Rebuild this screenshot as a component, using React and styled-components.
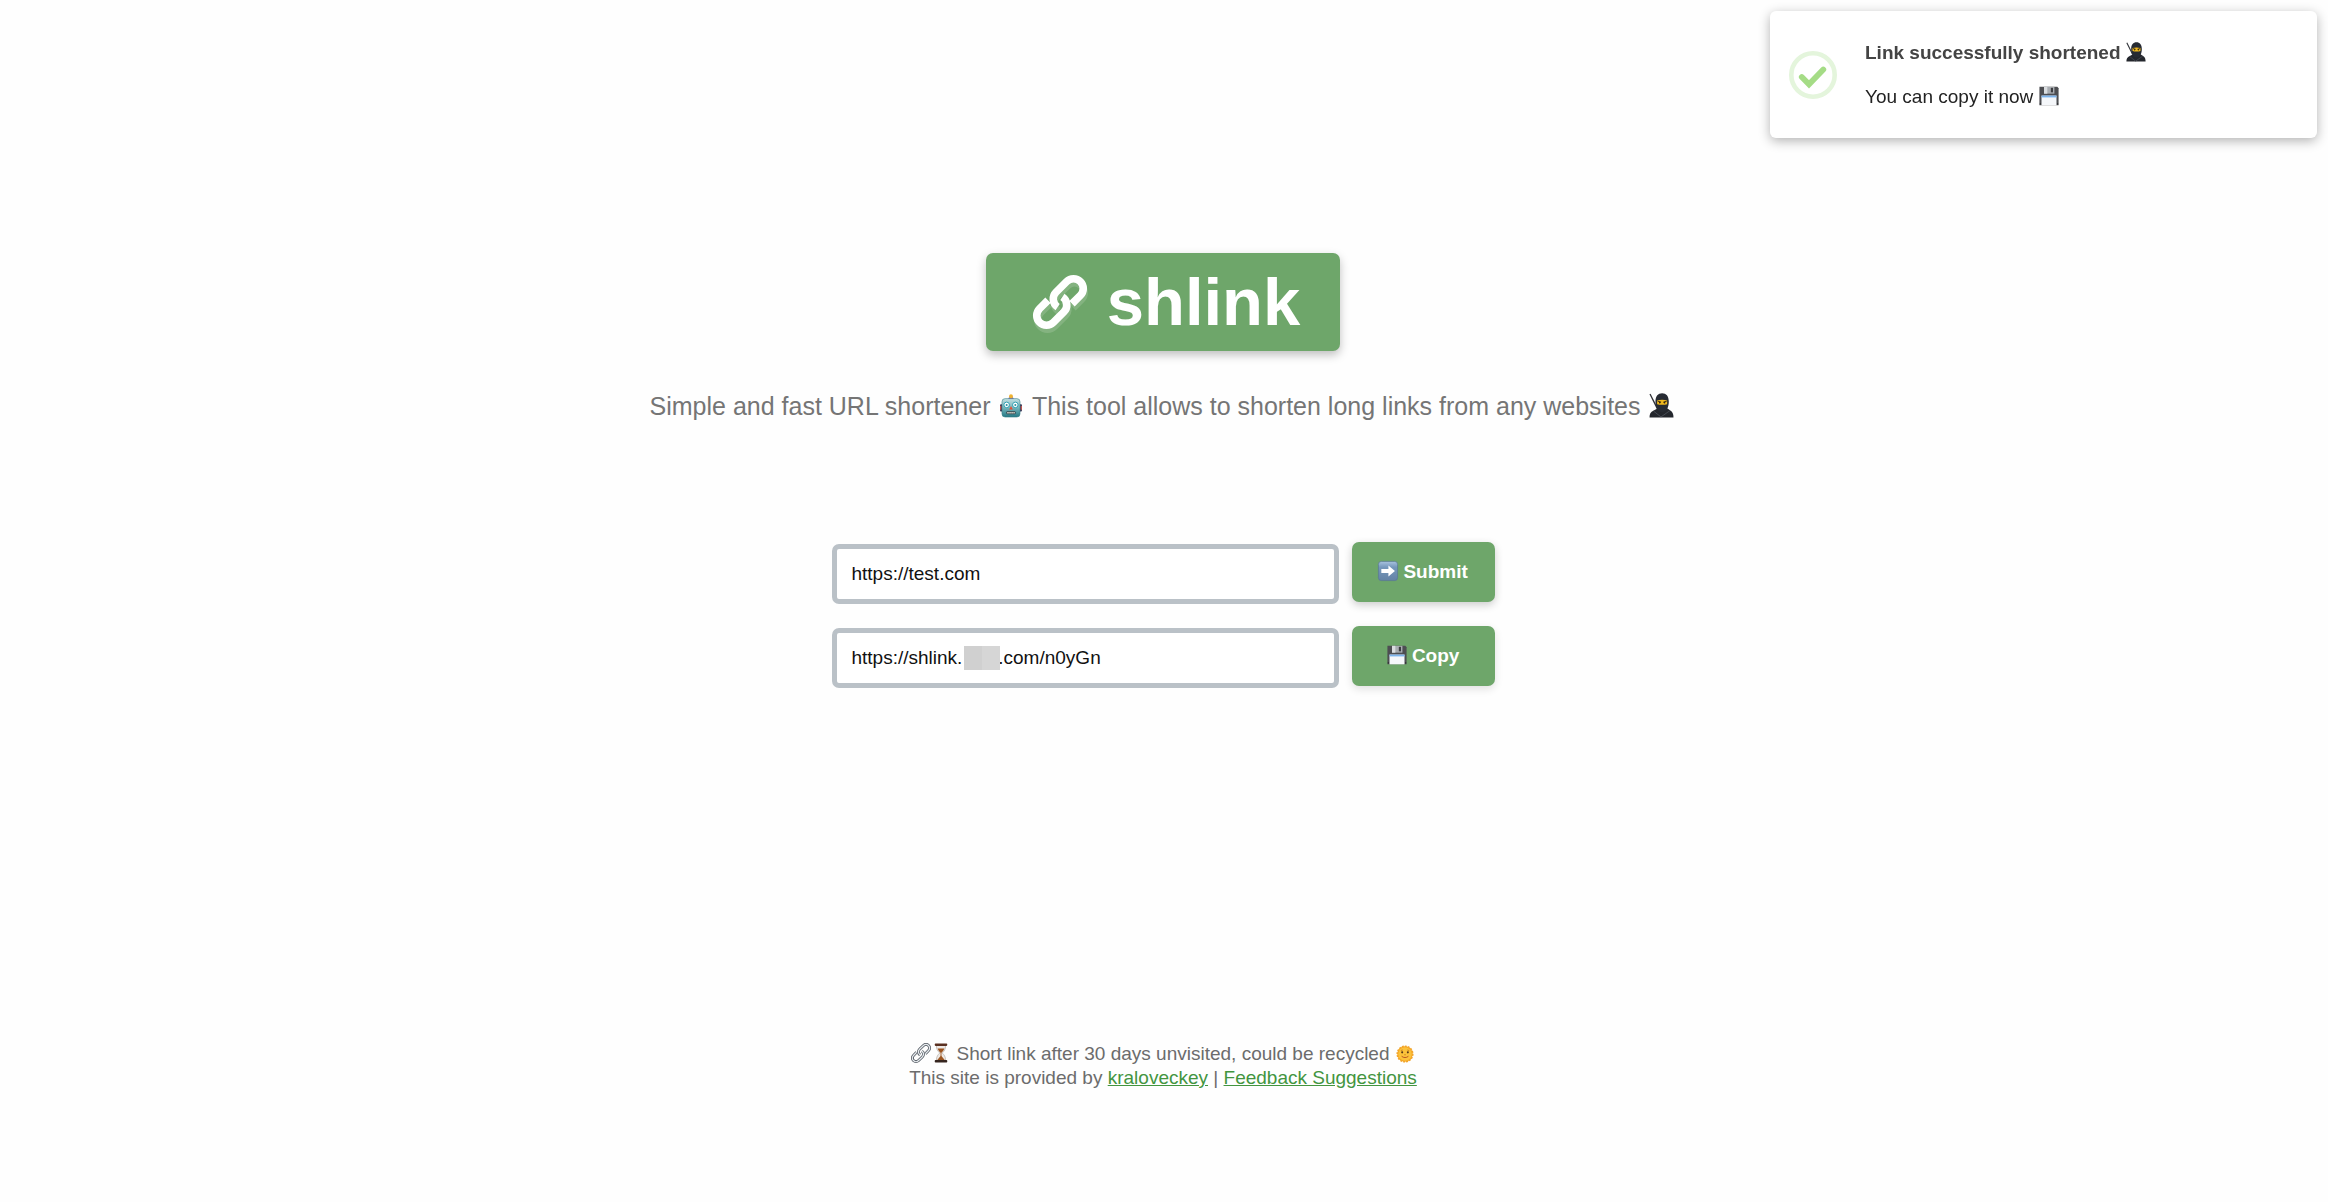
import React, { useState } from "react";
import styled, { createGlobalStyle } from "styled-components";

const GlobalStyle = createGlobalStyle`
  *, *::before, *::after { box-sizing: border-box; }
  body {
    margin: 0;
    background: #fefefe;
    color: #757575;
    font-family: "Liberation Sans", Arial, sans-serif;
    font-size: 19px;
    line-height: 24px;
  }
`;

const Page = styled.main`
  display: flex;
  flex-direction: column;
  align-items: center;
  padding: 253px 26px 24px 24px;
`;

const Logo = styled.h1`
  margin: 0;
  padding: 0 40px 0 46px;
  display: flex;
  align-items: center;
  gap: 19px;
  border-radius: 7px;
  background: #6ea66a;
  color: #fff;
  font-size: 67px;
  line-height: 98px;
  box-shadow: 0 4px 10px rgba(0, 0, 0, 0.25);
`;

const Tagline = styled.p`
  margin: 38px 0 0;
  font-size: 25px;
  line-height: 34px;
  text-align: center;
`;

const Form = styled.form`
  width: 100%;
  max-width: 663px;
  margin-top: 119px;
  display: flex;
  flex-direction: column;
  gap: 22px;
`;

const Row = styled.div`
  display: flex;
  gap: 13px;
`;

const Field = styled.label`
  position: relative;
  flex: 1;
  padding-top: 2px;
`;

const TextInput = styled.input`
  display: block;
  width: 100%;
  height: 60px;
  padding: 0 15px;
  border: 5px solid #bac1c7;
  border-radius: 7px;
  background: #fff;
  color: #111;
  font: inherit;
  outline: none;
`;

const Redaction = styled.span`
  position: absolute;
  left: 132px;
  top: 20px;
  width: 36px;
  height: 24px;
  background: linear-gradient(90deg, #d0d0d0 50%, #d6d6d6 50%);
`;

const Button = styled.button`
  width: 143px;
  height: 60px;
  padding: 0;
  border: 0;
  border-radius: 7px;
  background: #6ea66a;
  color: #fff;
  font: inherit;
  font-weight: 700;
  cursor: pointer;
  box-shadow: 0 3px 8px rgba(0, 0, 0, ${(p) => (p.$flat ? 0.12 : 0.2)});
`;

const Footer = styled.footer`
  margin-top: 354px;
  text-align: center;
  color: #6c6c6c;

  p { margin: 0; }
`;

const FooterLink = styled.a`
  color: #43953f;
  text-decoration: underline;
`;

const Toast = styled.aside`
  position: fixed;
  top: 11px;
  right: 11px;
  width: 547px;
  max-width: calc(100vw - 22px);
  padding: 30px 18px;
  display: flex;
  align-items: center;
  gap: 27px;
  border-radius: 6px;
  background: #fff;
  box-shadow: 0 3px 12px rgba(0, 0, 0, 0.3);

  h2 {
    margin: 0 0 21px;
    color: #444;
    font-size: 19px;
    line-height: 23px;
  }
  p {
    margin: 0;
    color: #222;
    line-height: 23px;
  }
`;

const Glyph = styled.svg`
  width: ${(p) => p.$w || 20}px;
  height: ${(p) => p.$size || 20}px;
  margin: 0 ${(p) => p.$gap || 0}px;
  vertical-align: -3px;
  overflow: visible;
`;

const Check = styled.svg`
  flex: none;
  width: 50px;
  height: 50px;
`;

const LogoMark = styled.svg`
  width: 56px;
  height: 56px;
  overflow: visible;
`;

const upper = "M39 28.8L47.4 20.4A9.7 9.7 0 0 0 33.6 6.6L23.1 17.1A9.7 9.7 0 0 0 24.6 32.1";
const lower = "M15 25.2L6.6 33.6A9.7 9.7 0 0 0 20.4 47.4L30.9 36.9A9.7 9.7 0 0 0 29.4 21.9";

const Ninja = (p) => (
  <Glyph viewBox="0 0 24 24" role="img" aria-label="ninja" {...p}>
    <path d="M1 1l7 14" stroke="#303238" strokeWidth="1.3" />
    <path d="M.5 23.500c0-3 .8-5.200 4-6.600l4.500-2.400h8l3.500 2.200c2.400 1.400 3 3.800 3 6.800z" fill="#24272d" />
    <path d="M6.200 8.500C6.200 3 8.700.3 12.600.3S19 3 19 8.500s-2.300 10-6.400 10-6.400-4.500-6.400-10z" fill="#272b33" />
    <path d="M7.800 7.200c2.900-1 6.700-1 9.600 0v3.500c-2.600.9-7 .9-9.600 0z" fill="#f0b91e" />
    <path d="M8.400 7.800l3.200 1M17 7.800l-3.200 1" stroke="#3b2a10" strokeWidth="1" />
    <circle cx="10.300" cy="9.300" r=".8" fill="#33210c" />
    <circle cx="14.900" cy="9.300" r=".8" fill="#33210c" />
    <path d="M4.500 17.500l7 5.500 8.500-6" stroke="#4d525b" strokeWidth=".8" fill="none" />
  </Glyph>
);

const Floppy = (p) => (
  <Glyph viewBox="0 0 24 24" role="img" aria-label="floppy disk" {...p}>
    <path d="M.5 1h21.500l1.500 1.600v20.500H.5z" fill="#4d4e52" />
    <path d="M6 1h12.500v8.200H6z" fill="#a9adb2" />
    <path d="M6 1h4v8.200H6z" fill="#dadde0" />
    <path d="M14.200 2.200h2.600v5.400h-2.600z" fill="#3c3d41" />
    <path d="M3 11.500h18v11.700H3z" fill="#f5f7fa" />
    <path d="M3 11.500h18v2.200H3z" fill="#7db5ed" />
    <path d="M1 21.500h1M22 21.500h1" stroke="#111" strokeWidth="1.200" />
  </Glyph>
);

const Robot = (p) => (
  <Glyph viewBox="0 0 24 26" role="img" aria-label="robot" {...p}>
    <defs>
      <linearGradient id="robot-face" x1="0" y1="0" x2="0" y2="1">
        <stop offset="0" stopColor="#c4dfe2" />
        <stop offset=".5" stopColor="#74b4bb" />
        <stop offset="1" stopColor="#237783" />
      </linearGradient>
    </defs>
    <rect x=".2" y="11" width="3" height="8" rx="1" fill="#342d4d" />
    <rect x="20.800" y="11" width="3" height="8" rx="1" fill="#342d4d" />
    <path d="M.3 13h1.200v4H.3zM22.500 13h1.200v4h-1.200z" fill="#df594b" />
    <rect x="2.200" y="5" width="19.600" height="20" rx="3.500" fill="url(#robot-face)" stroke="#387f87" strokeWidth=".6" />
    <path d="M9 5c.6-1.800 5.400-1.800 6 0z" fill="#4a3c80" />
    <circle cx="12" cy="2.400" r="2.100" fill="#efb232" />
    <circle cx="7.300" cy="11.800" r="3" fill="#fff" stroke="#249aae" strokeWidth="1" />
    <circle cx="16.700" cy="11.800" r="3" fill="#fff" stroke="#249aae" strokeWidth="1" />
    <circle cx="7.300" cy="11.800" r="1.100" fill="#27909f" />
    <circle cx="16.700" cy="11.800" r="1.100" fill="#27909f" />
    <path d="M12 13l2 3.700h-4z" fill="#e64d31" />
    <rect x="7" y="18.700" width="10" height="3.200" rx="1" fill="#35434a" />
    <path d="M8 20.300h8" stroke="#e9e9de" strokeWidth="1.500" strokeDasharray="1.500 .7" />
  </Glyph>
);

const Arrow = (p) => (
  <Glyph viewBox="0 0 24 24" role="img" aria-label="right arrow" {...p}>
    <defs>
      <linearGradient id="arrow-tile" x1="0" y1="0" x2="0" y2="1">
        <stop offset="0" stopColor="#a9c3df" />
        <stop offset=".3" stopColor="#7698bc" />
        <stop offset="1" stopColor="#6482a5" />
      </linearGradient>
    </defs>
    <rect x=".5" y=".5" width="23" height="23" rx="3.500" fill="url(#arrow-tile)" stroke="#577596" strokeWidth=".8" />
    <path d="M4 9.500h8.500V5.300l7.800 6.700-7.800 6.700v-4.200H4z" fill="#fff" />
  </Glyph>
);

const Chain = (p) => (
  <Glyph viewBox="0 0 54 54" role="img" aria-label="link" {...p}>
    <g fill="none">
      <g stroke="#4c535b" strokeWidth="7.500"><path d={upper} /><path d={lower} /></g>
      <g stroke="#e6eaee" strokeWidth="3.600"><path d={upper} /><path d={lower} /></g>
    </g>
  </Glyph>
);

const Hourglass = (p) => (
  <Glyph viewBox="0 0 16 24" role="img" aria-label="hourglass" {...p}>
    <path d="M2.500 3h11c0 5-1.600 6.500-4 9 2.400 2.500 4 4 4 9h-11c0-5 1.600-6.500 4-9-2.400-2.500-4-4-4-9z" fill="#eee9e5" stroke="#b1aaa5" strokeWidth=".8" />
    <path d="M4 6.500h8c-.7 2.500-2 3.500-4 5.500-2-2-3.300-3-4-5.500zM8 15l4.500 5.500h-9z" fill="#9b5521" />
    <path d="M7.500 11h1v5h-1z" fill="#9b5521" />
    <rect x=".5" y=".5" width="15" height="3" rx="1" fill="#5a3020" />
    <rect x=".5" y="20.500" width="15" height="3" rx="1" fill="#35251f" />
  </Glyph>
);

const Sun = (p) => (
  <Glyph viewBox="0 0 24 24" role="img" aria-label="sun with face" {...p}>
    <circle cx="12" cy="12" r="10.300" fill="#f5a522" stroke="#f2a52a" strokeWidth="2.200" strokeDasharray="2.600 1.400" />
    <circle cx="12" cy="12" r="9" fill="#fcc23b" />
    <circle cx="8.200" cy="9.800" r="1.400" fill="#563819" />
    <circle cx="15.800" cy="9.800" r="1.400" fill="#563819" />
    <path d="M6.500 7.300l2.500-.6M15 6.700l2.500.6M11 13h2" stroke="#b97317" strokeWidth="1" />
    <path d="M7.500 15c2.500 2.300 6.500 2.300 9 0" stroke="#b65322" strokeWidth="1.300" fill="none" />
  </Glyph>
);

export default function App() {
  const [url, setUrl] = useState("https://test.com");
  return (
    <>
      <GlobalStyle />
      <Page>
        <Logo>
          <LogoMark viewBox="-1 -1 56 56" aria-hidden="true">
            <g fill="none" stroke="#fff" strokeWidth="7.600">
              <g opacity=".15" transform="translate(1 4)"><path d={upper} /><path d={lower} /></g>
              <path d={upper} />
              <path d={lower} />
            </g>
          </LogoMark>
          shlink
        </Logo>
        <Tagline>
          Simple and fast URL shortener <Robot $w={24} $size={24} $gap={2} /> This tool allows to shorten long links from any websites <Ninja $w={25} $size={25} $gap={2} />
        </Tagline>
        <Form onSubmit={(e) => e.preventDefault()}>
          <Row>
            <Field>
              <TextInput aria-label="Long link" value={url} onChange={(e) => setUrl(e.target.value)} />
            </Field>
            <Button type="submit"><Arrow /> Submit</Button>
          </Row>
          <Row>
            <Field>
              <TextInput aria-label="Short link" readOnly value={"https://shlink." + "\u00a0".repeat(5) + "\u2002.com/n0yGn"} />
              <Redaction />
            </Field>
            <Button type="button" $flat><Floppy /> Copy</Button>
          </Row>
        </Form>
        <Footer>
          <p><Chain /><Hourglass $w={14} $gap={3} /> Short link after 30 days unvisited, could be recycled <Sun $w={18} $size={18} $gap={1} /></p>
          <p>
            This site is provided by <FooterLink href="#kraloveckey">kraloveckey</FooterLink> | <FooterLink href="#feedback">Feedback Suggestions</FooterLink>
          </p>
        </Footer>
      </Page>
      <Toast role="status">
        <Check viewBox="0 0 50 50" aria-hidden="true">
          <circle cx="25" cy="25" r="21.700" fill="none" stroke="#e4f5dc" strokeWidth="4.600" />
          <path d="M13.800 27l7.200 7.300L35.300 19.500" fill="none" stroke="#a5dc86" strokeWidth="5.800" strokeLinecap="round" />
        </Check>
        <div>
          <h2>Link successfully shortened <Ninja /></h2>
          <p>You can copy it now <Floppy /></p>
        </div>
      </Toast>
    </>
  );
}
